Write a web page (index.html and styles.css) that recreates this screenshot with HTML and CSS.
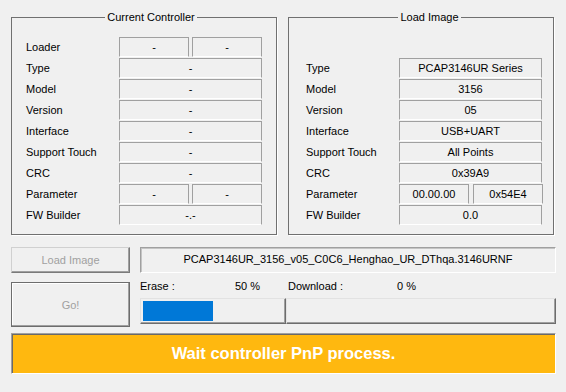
FILE: index.html
```html
<!DOCTYPE html>
<html lang="en">
<head>
    <meta charset="UTF-8">
    <title>Firmware Update</title>
    <link rel="stylesheet" href="styles.css">
</head>
<body>
    <div class="groups">
        <fieldset class="group">
            <legend>Current Controller</legend>
            <div class="rows">
                <div class="label">Loader</div>
                <div class="pair"><div class="value">-</div><div class="value">-</div></div>
                <div class="label">Type</div>
                <div class="value">-</div>
                <div class="label">Model</div>
                <div class="value">-</div>
                <div class="label">Version</div>
                <div class="value">-</div>
                <div class="label">Interface</div>
                <div class="value">-</div>
                <div class="label">Support Touch</div>
                <div class="value">-</div>
                <div class="label">CRC</div>
                <div class="value">-</div>
                <div class="label">Parameter</div>
                <div class="pair"><div class="value">-</div><div class="value">-</div></div>
                <div class="label">FW Builder</div>
                <div class="value">-.-</div>
            </div>
        </fieldset>
        <fieldset class="group group-right">
            <legend>Load Image</legend>
            <div class="rows">
                <div class="label"></div>
                <div class="blank"></div>
                <div class="label">Type</div>
                <div class="value">PCAP3146UR Series</div>
                <div class="label">Model</div>
                <div class="value">3156</div>
                <div class="label">Version</div>
                <div class="value">05</div>
                <div class="label">Interface</div>
                <div class="value">USB+UART</div>
                <div class="label">Support Touch</div>
                <div class="value">All Points</div>
                <div class="label">CRC</div>
                <div class="value">0x39A9</div>
                <div class="label">Parameter</div>
                <div class="pair pair-wide"><div class="value">00.00.00</div><div class="value">0x54E4</div></div>
                <div class="label">FW Builder</div>
                <div class="value">0.0</div>
            </div>
        </fieldset>
    </div>

    <div class="controls">
        <button class="btn btn-load" disabled>Load Image</button>
        <div class="file-box">PCAP3146UR_3156_v05_C0C6_Henghao_UR_DThqa.3146URNF</div>

        <button class="btn btn-go" disabled>Go!</button>
        <div class="progress-area">
            <div class="progress-labels">
                <div class="plabel plabel-erase"><span>Erase :</span><span class="pct">50 %</span></div>
                <div class="plabel"><span>Download :</span><span class="pct">0 %</span></div>
            </div>
            <div class="bars">
                <div class="bar bar-erase"><div class="fill" style="width: 50%"></div></div>
                <div class="bar bar-download"><div class="fill" style="width: 0%"></div></div>
            </div>
        </div>

        <div class="status">Wait controller PnP process.</div>
    </div>
</body>
</html>
```

FILE: styles.css
```css
:root {
    --window-bg: #f0f0f0;
    --edge-dark: #a0a0a0;
    --edge-darker: #696969;
    --frame: #707070;
    --accent: #0078d7;
    --status-bg: #ffb80f;
}
body {
    margin: 0;
    background-color: var(--window-bg);
    font-family: "Liberation Sans", Arial, sans-serif;
    font-size: 11px;
    color: #000;
    width: 566px;
    height: 392px;
    overflow: hidden;
}
.groups {
    display: flex;
    gap: 11px;
    padding: 11px 0 0 11px;
}
.group {
    box-sizing: border-box;
    width: 266px;
    margin: 0;
    padding: 14px 0 9px 14px;
    border: 1px solid var(--frame);
    box-shadow: 1px 1px 0 #fff;
}
.group-right {
    padding-left: 17px;
}
.group legend {
    margin: 0 auto;
    padding: 0 2px;
    line-height: 12px;
}
.rows {
    display: grid;
    grid-template-columns: 93px 143px;
    grid-auto-rows: 20px;
    row-gap: 1px;
}
.label {
    line-height: 20px;
    white-space: nowrap;
}
.value {
    box-sizing: border-box;
    height: 20px;
    line-height: 18px;
    text-align: center;
    border: 1px solid var(--edge-dark);
    border-bottom-color: #fff;
    white-space: nowrap;
}
.pair {
    display: grid;
    grid-template-columns: 70px 70px;
    column-gap: 3px;
}
.pair-wide {
    column-gap: 4px;
}
.controls {
    display: grid;
    grid-template-columns: 119px 1fr;
    column-gap: 10px;
    width: 545px;
    padding: 12px 0 0 11px;
}
.btn {
    box-sizing: border-box;
    margin: 0;
    background-color: var(--window-bg);
    color: #a0a0a0;
    font-family: inherit;
    font-size: 11px;
    padding: 0;
}
.btn-load {
    height: 26px;
    border: 1px solid;
    border-color: #d0d0d0 #7a7a7a #7a7a7a #d0d0d0;
    box-shadow: inset -1px -1px 0 #a0a0a0;
}
.btn-go {
    height: 45px;
    margin-top: 9px;
    border: 1px solid #6d6d6d;
    box-shadow: inset -1px -1px 0 #a0a0a0, inset 1px 1px 0 #fff;
}
.file-box {
    box-sizing: border-box;
    height: 26px;
    line-height: 22px;
    text-align: center;
    border: 1px solid;
    border-color: var(--edge-dark) #fff #fff var(--edge-dark);
    box-shadow: inset 1px 1px 0 #c4c4c4;
    white-space: nowrap;
    overflow: hidden;
}
.progress-area {
    display: flex;
    flex-direction: column;
}
.progress-labels {
    display: flex;
    height: 14px;
    margin-top: 6px;
    line-height: 14px;
}
.plabel {
    display: flex;
    width: 148px;
}
.plabel .pct {
    margin-left: auto;
    margin-right: 28px;
}
.plabel:last-child {
    width: 128px;
}
.plabel:last-child .pct {
    margin-right: 0;
}
.bars {
    display: flex;
    margin-top: 5px;
}
.bar {
    box-sizing: border-box;
    height: 26px;
    padding: 2px 3px 2px 2px;
    border: 1px solid;
    border-color: #e2e2e2 #6d6d6d #6d6d6d #e2e2e2;
    box-shadow: inset -1px -1px 0 #a0a0a0;
}
.bar-erase {
    width: 146px;
}
.bar-download {
    flex: 1;
}
.fill {
    height: 100%;
    background-color: var(--accent);
}
.status {
    grid-column: 1 / -1;
    box-sizing: border-box;
    height: 41px;
    margin-top: 6px;
    background-color: var(--status-bg);
    border: 1px solid;
    border-color: var(--edge-dark) #fff #fff var(--edge-dark);
    box-shadow: inset 1px 1px 0 var(--edge-darker);
    color: #fff;
    font-weight: bold;
    font-size: 16.5px;
    line-height: 38px;
    text-align: center;
}
```
